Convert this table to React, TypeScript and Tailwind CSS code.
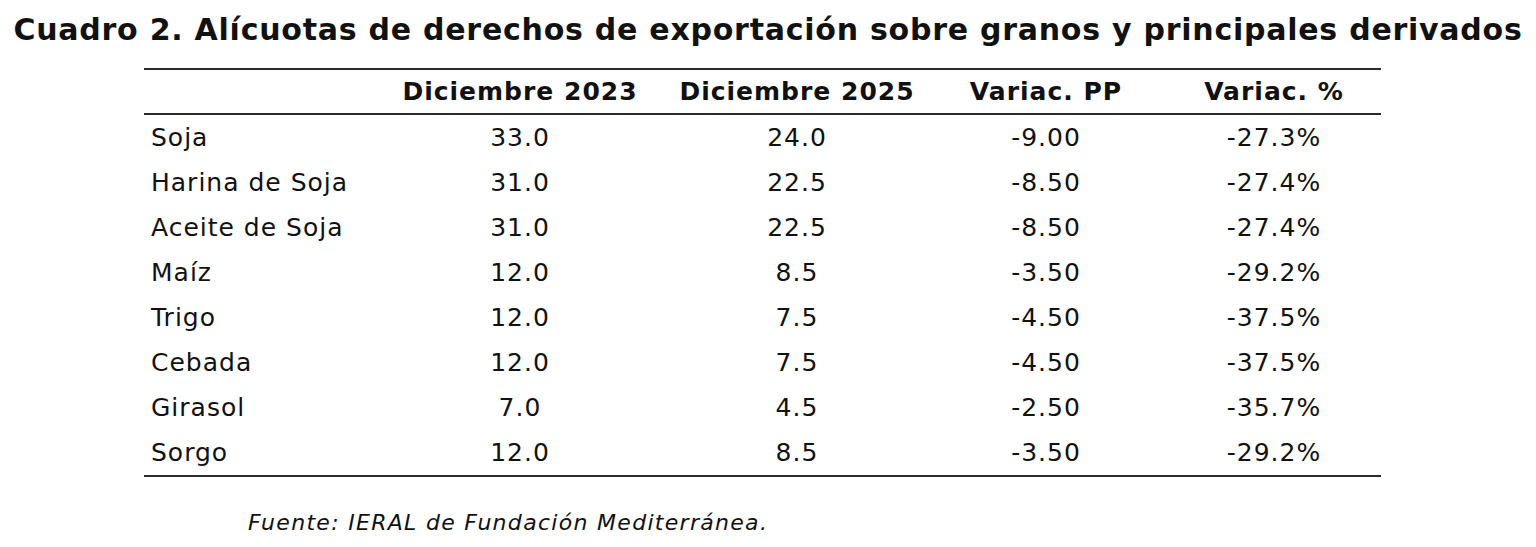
const rows = [
  ["Soja", "33.0", "24.0", "-9.00", "-27.3%"],
  ["Harina de Soja", "31.0", "22.5", "-8.50", "-27.4%"],
  ["Aceite de Soja", "31.0", "22.5", "-8.50", "-27.4%"],
  ["Maíz", "12.0", "8.5", "-3.50", "-29.2%"],
  ["Trigo", "12.0", "7.5", "-4.50", "-37.5%"],
  ["Cebada", "12.0", "7.5", "-4.50", "-37.5%"],
  ["Girasol", "7.0", "4.5", "-2.50", "-35.7%"],
  ["Sorgo", "12.0", "8.5", "-3.50", "-29.2%"],
]

const cols = "grid grid-cols-[254px_244px_310px_188px_241px] items-center"

export default function App() {
  return (
    <div className="w-[1536px] h-[547px] bg-white text-[#111] font-['DejaVu_Sans',sans-serif] overflow-hidden">
      <h1 className="pt-[12px] h-[68px] text-center whitespace-nowrap text-[30px] leading-[36px] font-bold tracking-[0.75px]">
        Cuadro 2. Alícuotas de derechos de exportación sobre granos y principales derivados
      </h1>

      <div className="ml-[144px] w-[1237px]">
        <div className="h-[2px] bg-[#2b2b2b]" />
        <div className={`${cols} h-[43px] text-[25px] font-bold tracking-[1px]`}>
          <div />
          <div className="text-center">Diciembre 2023</div>
          <div className="text-center">Diciembre 2025</div>
          <div className="text-center">Variac. PP</div>
          <div className="text-center pl-[27px]">Variac. %</div>
        </div>
        <div className="h-[2px] bg-[#2b2b2b]" />
        {rows.map((r) => (
          <div key={r[0]} className={`${cols} h-[45px] text-[25px] font-normal tracking-[1px]`}>
            <div className="pl-[7px]">{r[0]}</div>
            <div className="text-center">{r[1]}</div>
            <div className="text-center">{r[2]}</div>
            <div className="text-center">{r[3]}</div>
            <div className="text-center pl-[27px]">{r[4]}</div>
          </div>
        ))}
        <div className="h-[2px] bg-[#2b2b2b]" />
      </div>

      <p className="mt-[32px] ml-[248px] text-[22px] leading-[28px] italic tracking-[1.3px]">
        Fuente: IERAL de Fundación Mediterránea.
      </p>
    </div>
  )
}
